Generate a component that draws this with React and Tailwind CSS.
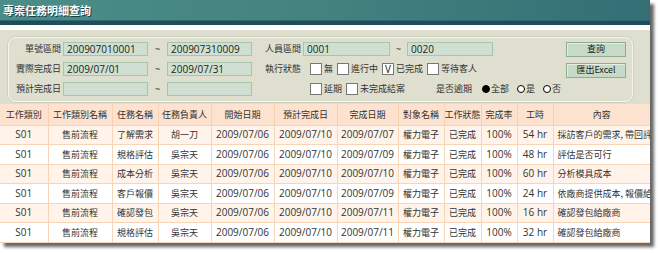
import React from "react";

const cjk = '"Noto Sans CJK TC", "Noto Sans CJK SC", sans-serif';
const lat = '"Open Sans", "Noto Sans CJK TC", sans-serif';

const cols = [48, 64, 46, 53, 63, 63, 61, 46, 37, 36, 36, 97];
const headers = ["工作類別", "工作類別名稱", "任務名稱", "任務負責人", "開始日期", "預計完成日", "完成日期", "對象名稱", "工作狀態", "完成率", "工時", "內容"];
const rows = [
  ["S01", "售前流程", "了解需求", "胡一刀", "2009/07/06", "2009/07/10", "2009/07/07", "權力電子", "已完成", "100%", "54 hr", "採訪客戶的需求, 帶回評估"],
  ["S01", "售前流程", "規格評估", "吳宗天", "2009/07/06", "2009/07/10", "2009/07/09", "權力電子", "已完成", "100%", "48 hr", "評估是否可行"],
  ["S01", "售前流程", "成本分析", "吳宗天", "2009/07/06", "2009/07/10", "2009/07/10", "權力電子", "已完成", "100%", "60 hr", "分析模具成本"],
  ["S01", "售前流程", "客戶報價", "吳宗天", "2009/07/06", "2009/07/10", "2009/07/09", "權力電子", "已完成", "100%", "24 hr", "依廠商提供成本, 報價給客戶"],
  ["S01", "售前流程", "確認發包", "吳宗天", "2009/07/06", "2009/07/10", "2009/07/11", "權力電子", "已完成", "100%", "16 hr", "確認發包給廠商"],
  ["S01", "售前流程", "規格評估", "吳宗天", "2009/07/06", "2009/07/10", "2009/07/11", "權力電子", "已完成", "100%", "32 hr", "確認發包給廠商"],
];
const cjkCols = new Set([1, 2, 3, 7, 8, 11]);

function Label({ children, w }) {
  return (
    <div className="text-right pr-[2px] text-[9px] leading-[14px] text-[#333] whitespace-nowrap" style={{ width: w, fontFamily: cjk }}>
      {children}
    </div>
  );
}
function Input({ value, w = 85 }) {
  return (
    <div className="h-[14px] border border-[#a9c4ad] bg-[#cfe0d2] pl-[3px] text-[10px] leading-[12px] text-[#222]" style={{ width: w, fontFamily: lat }}>
      {value}
    </div>
  );
}
function Tilde({ w }) {
  return (
    <div className="text-center text-[9px] leading-[14px] text-[#333]" style={{ width: w, fontFamily: lat }}>~</div>
  );
}
function Check({ checked, label }) {
  return (
    <div className="flex items-center">
      <div className="w-[12px] h-[12px] border border-[#777] bg-white flex items-center justify-center text-[10px] leading-none text-[#222]" style={{ fontFamily: lat }}>
        {checked ? "V" : ""}
      </div>
      <span className="ml-[2px] text-[9px] leading-[14px] text-[#333]" style={{ fontFamily: cjk }}>{label}</span>
    </div>
  );
}
function Radio({ on, label }) {
  return (
    <div className="flex items-center">
      <div className={"w-[8px] h-[8px] rounded-full border border-black " + (on ? "bg-black" : "bg-white")} />
      <span className="ml-[1px] text-[9px] leading-[14px] text-[#333]" style={{ fontFamily: cjk }}>{label}</span>
    </div>
  );
}
function Btn({ children }) {
  return (
    <div className="w-[60px] h-[15px] border border-[#8fab93] bg-[#c6dac7] shadow-[inset_1px_1px_0_#e4efe4] flex items-center justify-center text-[9px] text-[#222]" style={{ fontFamily: cjk }}>
      {children}
    </div>
  );
}

export default function App() {
  return (
    <div className="w-[658px] h-[253px] bg-white overflow-hidden">
      <div className="w-[650px] bg-white shadow-[4px_4px_3px_rgba(0,0,0,0.6)]">
        {/* Title */}
        <div className="h-[20px] bg-gradient-to-r from-[#4a8e8a] via-[#43827f] to-[#336f75] flex items-center pl-[3px]">
          <span className="text-white font-bold text-[11px] leading-none [text-shadow:1px_1px_0_#1b3f45]" style={{ fontFamily: cjk }}>專案任務明細查詢</span>
        </div>
        <div className="h-[5px] bg-[#1f4e5a] border-t border-[#2f6670]" />
        <div className="h-[5px] bg-white" />
        {/* Panel */}
        <div className="bg-[#dfdfcf] pt-[7px] pb-[2px] pl-[8px] pr-[17px]">
          <div className="border border-[#f6f6ee] rounded-[8px] pt-[4px] pb-[5px] pr-[6px] flex flex-col gap-[6px] shadow-[0_0_0_1px_#cfcfbf]">
            <div className="flex h-[14px] items-center">
              <Label w={54}>單號區間</Label>
              <Input value="200907010001" />
              <Tilde w={19} />
              <Input value="200907310009" />
              <Label w={51}>人員區間</Label>
              <Input value="0001" w={87} />
              <Tilde w={17} />
              <Input value="0020" w={86} />
              <div className="flex-1" />
              <Btn>查詢</Btn>
            </div>
            <div className="flex h-[14px] items-center">
              <Label w={54}>實際完成日</Label>
              <Input value="2009/07/01" />
              <Tilde w={19} />
              <Input value="2009/07/31" />
              <Label w={51}>執行狀態</Label>
              <div className="ml-[7px] flex items-center gap-[4px]">
                <Check label="無" />
                <Check label="進行中" />
                <Check checked label="已完成" />
                <Check label="等待客人" />
              </div>
              <div className="flex-1" />
              <div className="mt-[2px]"><Btn>匯出Excel</Btn></div>
            </div>
            <div className="flex h-[14px] items-center">
              <Label w={54}>預計完成日</Label>
              <Input value="" />
              <Tilde w={19} />
              <Input value="" />
              <div className="w-[51px]" />
              <div className="ml-[7px] flex items-center gap-[4px] w-[126px]">
                <Check label="延期" />
                <Check label="未完成結案" />
              </div>
              <span className="w-[46px] text-[9px] leading-[14px] text-[#333]" style={{ fontFamily: cjk }}>是否逾期</span>
              <div className="flex items-center gap-[8px]">
                <Radio on label="全部" />
                <Radio label="是" />
                <Radio label="否" />
              </div>
            </div>
          </div>
        </div>
        {/* Table */}
        <table className="table-fixed border-collapse w-[650px]">
          <colgroup>
            {cols.map((w, i) => <col key={i} style={{ width: w }} />)}
          </colgroup>
          <thead>
            <tr className="h-[21px] bg-[#fde3cf]">
              {headers.map((h, i) => (
                <th key={i} className="border-r border-b border-[#f9d2b2] last:border-r-0 font-normal text-[9px] text-[#333] whitespace-nowrap overflow-hidden p-0 text-center" style={{ fontFamily: cjk }}>
                  {h}
                </th>
              ))}
            </tr>
          </thead>
          <tbody>
            {rows.map((r, ri) => (
              <tr key={ri} className={"h-[19.5px] " + (ri % 2 === 0 ? "bg-[#fff3ea]" : "bg-white")}>
                {r.map((c, ci) => (
                  <td
                    key={ci}
                    className={
                      "border-r border-b border-[#f9d5b8] last:border-r-0 p-0 whitespace-nowrap overflow-hidden text-[#333] " +
                      (ci === 11 ? "text-left pl-[4px] " : "text-center ") +
                      (cjkCols.has(ci) ? "text-[9px]" : "text-[10px]")
                    }
                    style={{ fontFamily: cjkCols.has(ci) ? cjk : lat }}
                  >
                    {c}
                  </td>
                ))}
              </tr>
            ))}
          </tbody>
        </table>
      </div>
    </div>
  );
}
